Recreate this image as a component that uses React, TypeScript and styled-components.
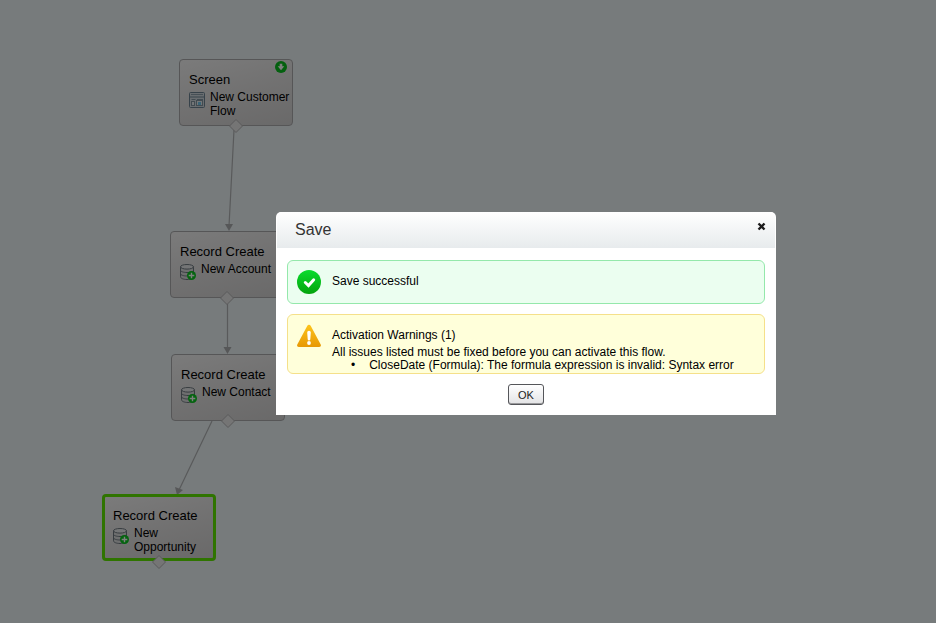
import React from "react";
import styled, { createGlobalStyle } from "styled-components";

const GlobalStyle = createGlobalStyle`
  * { box-sizing: border-box; }
  html, body, #root { height: 100%; }
  body {
    margin: 0;
    font-family: "Liberation Sans", Arial, Helvetica, sans-serif;
    font-size: 12px;
    color: #000;
  }
`;

const Page = styled.div`
  position: relative;
  min-height: 100%;
  overflow: hidden;
  background: #eef6f8;
`;

const Canvas = styled.main`
  position: absolute;
  inset: 0;
`;

const Connectors = styled.svg`
  position: absolute;
  inset: 0;
  width: 100%;
  height: 100%;
`;

const NodeCard = styled.article<{ $x: number; $y: number; $selected?: boolean }>`
  position: absolute;
  left: ${(p) => p.$x}px;
  top: ${(p) => p.$y}px;
  width: 114px;
  height: 67px;
  padding: ${(p) => (p.$selected ? "11px 0 0 8px" : "12px 0 0 9px")};
  border: ${(p) => (p.$selected ? "3px solid #5ee800" : "1px solid #acacae")};
  border-radius: 4px;
  background: linear-gradient(165deg, #f6f6f6 0%, #e4e3e3 50%, #d4d3d3 100%);
`;

const NodeType = styled.h2`
  margin: 0;
  font-size: 13px;
  line-height: 15px;
  font-weight: 400;
`;

const NodeBody = styled.div`
  display: flex;
  align-items: flex-start;
  gap: 5px;
  margin-top: 3px;

  svg { flex: none; margin-top: 2px; }
`;

const NodeName = styled.span`
  font-size: 12px;
  line-height: 14px;
`;

const StartBadge = styled.svg`
  position: absolute;
  right: 5px;
  top: 1px;
`;

const Port = styled.svg<{ $selected?: boolean }>`
  position: absolute;
  left: 50%;
  bottom: ${(p) => (p.$selected ? "-12px" : "-9px")};
  transform: translateX(-50%);
`;

const Overlay = styled.div`
  position: absolute;
  inset: 0;
  display: flex;
  justify-content: flex-end;
  align-items: flex-start;
  padding: 212px 160px 0 16px;
  background: rgba(0, 0, 0, 0.5);
`;

const Dialog = styled.section`
  width: 100%;
  max-width: 500px;
  border-radius: 5px 5px 0 0;
  background: #fff;
`;

const DialogHeader = styled.header`
  display: flex;
  justify-content: space-between;
  align-items: flex-start;
  margin: 0 1px;
  height: 36px;
  padding: 8px 8px 0 18px;
  border-radius: 5px 5px 0 0;
  background: linear-gradient(#fff, #e7ebed);
`;

const DialogTitle = styled.h1`
  margin: 0;
  font-size: 16px;
  line-height: 20px;
  font-weight: 400;
  color: #333;
`;

const CloseButton = styled.button`
  display: flex;
  margin: 2px 0 0;
  padding: 0;
  border: 0;
  background: none;
`;

const DialogBody = styled.div`
  display: flex;
  flex-direction: column;
  gap: 10px;
  padding: 12px 11px 10px;
`;

const Notice = styled.div<{ $kind: "success" | "warning" }>`
  display: flex;
  align-items: flex-start;
  gap: 11px;
  padding: ${(p) => (p.$kind === "success" ? "8px 9px 8px" : "9px 9px 1px")};
  border: 1px solid ${(p) => (p.$kind === "success" ? "#94e8ab" : "#f5e08a")};
  border-radius: 6px;
  background: ${(p) => (p.$kind === "success" ? "#ebfef0" : "#ffffda")};

  svg { flex: none; }
`;

const Message = styled.p`
  margin: 4px 0 0;
  line-height: 16px;
`;

const WarningText = styled.div`
  padding-top: 3px;
`;

const WarningTitle = styled.h2`
  margin: 0 0 3px;
  font-size: 12px;
  line-height: 16px;
  font-weight: 400;
`;

const WarningLine = styled.p`
  margin: 0;
  line-height: 13px;
`;

const IssueList = styled.ul`
  margin: 0;
  padding: 0 0 0 19px;
  list-style: none;
`;

const Issue = styled.li`
  display: flex;
  gap: 14px;
  line-height: 13px;

  &::before { content: "•"; }
`;

const OkButton = styled.button`
  align-self: center;
  width: 36px;
  height: 21px;
  padding: 0;
  border: 1px solid #55565a;
  border-radius: 3px;
  background: linear-gradient(#fff, #e3e3e5);
  box-shadow: inset 0 -1px 0 #9a9a9c;
  font-family: inherit;
  font-size: 11px;
  line-height: 18px;
  color: #222;
`;

const ScreenIcon = () => (
  <svg width="16" height="16" viewBox="0 0 16 16" aria-hidden="true">
    <rect x="0.5" y="0.5" width="15" height="15" rx="1" fill="#d3dbe1" stroke="#6f8594" />
    <path d="M2 2.5h12" stroke="#8ea0ac" />
    <path d="M1 5h14" stroke="#6f8594" />
    <path d="M2.500 7.500h4M8 7.500h6" stroke="#8496a2" />
    <rect x="2.500" y="9.500" width="3" height="4" fill="#e6edf1" stroke="#8496a2" />
    <rect x="7.500" y="8.500" width="6" height="5" fill="#e6edf1" stroke="#8496a2" />
    <rect x="9" y="10" width="3" height="3" fill="#74c8ec" />
  </svg>
);

const RecordIcon = () => (
  <svg width="16" height="16" viewBox="0 0 16 16" aria-hidden="true">
    <path d="M.5 2.8v10C.5 14.3 3.400 15.500 7 15.500s6.500-1.200 6.500-2.700v-10z" fill="#dcdedf" stroke="#707a82" />
    <ellipse cx="7" cy="2.800" rx="6.500" ry="2.300" fill="#e9ebec" stroke="#707a82" />
    <path d="M.5 6.200c0 1.300 2.900 2.300 6.500 2.300s6.500-1 6.500-2.300M.5 9.700c0 1.300 2.900 2.300 6.500 2.300" fill="none" stroke="#707a82" />
    <circle cx="11.500" cy="11.500" r="4.500" fill="#08c81e" />
    <path d="M11.500 8.700v5.600M8.700 11.500h5.600" stroke="#fff" strokeWidth="1.400" />
  </svg>
);

const SuccessIcon = () => (
  <svg width="24" height="26" viewBox="0 0 24 26" aria-hidden="true">
    <defs>
      <linearGradient id="successFill" x1="0" y1="0" x2="0" y2="1">
        <stop offset="0" stopColor="#09dc2d" />
        <stop offset="1" stopColor="#05a30d" />
      </linearGradient>
    </defs>
    <circle cx="12" cy="13" r="12" fill="url(#successFill)" />
    <path d="M8.300 13.500l3.200 3 5.200-5.700" fill="none" stroke="#fff" strokeWidth="3" strokeLinecap="round" />
  </svg>
);

const WarningIcon = () => (
  <svg width="24" height="24" viewBox="0 0 24 24" aria-hidden="true">
    <defs>
      <linearGradient id="warningFill" x1="0" y1="0" x2="0" y2="1">
        <stop offset="0" stopColor="#fdc41c" />
        <stop offset="1" stopColor="#e79805" />
      </linearGradient>
    </defs>
    <path d="M10.200 2c.8-1.700 2.800-1.700 3.600 0l9.900 18.400c.6 1.200 0 2.600-1.500 2.600H1.800C.3 23-.3 21.600.3 20.400z" fill="url(#warningFill)" />
    <path d="M10.200 8.500a1.800 1.800 0 0 1 3.600 0l-.5 6.800a1.300 1.300 0 0 1-2.600 0z" fill="#fff" />
    <circle cx="12" cy="19" r="1.900" fill="#fff" />
  </svg>
);

const Diamond = ({ selected }: { selected?: boolean }) => (
  <Port $selected={selected} width="16" height="16" viewBox="0 0 16 16" aria-hidden="true">
    <path d="M8 1.500L14.500 8 8 14.500 1.500 8z" fill="#eaeaea" stroke="#b4b4b6" />
  </Port>
);

interface FlowNode {
  type: string;
  name: string;
  x: number;
  y: number;
  start?: boolean;
  selected?: boolean;
}

const nodes: FlowNode[] = [
  { type: "Screen", name: "New Customer Flow", x: 179, y: 59, start: true },
  { type: "Record Create", name: "New Account", x: 170, y: 231 },
  { type: "Record Create", name: "New Contact", x: 171, y: 354 },
  { type: "Record Create", name: "New Opportunity", x: 102, y: 494, selected: true },
];

export default function App() {
  return (
    <>
      <GlobalStyle />
      <Page>
        <Canvas>
          <Connectors aria-hidden="true">
            <g stroke="#b2b4b6" strokeWidth="1.200">
              <path d="M234 130L229 226M227.500 304V348M212 421L179 490" fill="none" />
            </g>
            <g fill="#adaeb0">
              <path d="M225 224h8l-4 7z" />
              <path d="M223.500 347h8l-4 7z" />
              <path d="M175 487l8 3-6 5z" />
            </g>
          </Connectors>
          {nodes.map((node) => (
            <NodeCard key={node.name} $x={node.x} $y={node.y} $selected={node.selected}>
              <NodeType>{node.type}</NodeType>
              <NodeBody>
                {node.start ? <ScreenIcon /> : <RecordIcon />}
                <NodeName>{node.name}</NodeName>
              </NodeBody>
              {node.start && (
                <StartBadge width="12" height="12" viewBox="0 0 12 12" aria-hidden="true">
                  <circle cx="6" cy="6" r="6" fill="#08c01e" />
                  <path d="M4.700 2.800h2.600v2.400h2L6 9.200 2.700 5.200h2z" fill="#fff" />
                </StartBadge>
              )}
              <Diamond selected={node.selected} />
            </NodeCard>
          ))}
        </Canvas>
        <Overlay>
          <Dialog role="dialog" aria-modal="true" aria-labelledby="dialog-title">
            <DialogHeader>
              <DialogTitle id="dialog-title">Save</DialogTitle>
              <CloseButton type="button" aria-label="Close">
                <svg width="10" height="10" viewBox="0 0 10 10" aria-hidden="true">
                  <path d="M1.500 1.500l6 6M7.500 1.500l-6 6" stroke="#1c1c1c" strokeWidth="2.400" />
                </svg>
              </CloseButton>
            </DialogHeader>
            <DialogBody>
              <Notice $kind="success">
                <SuccessIcon />
                <Message>Save successful</Message>
              </Notice>
              <Notice $kind="warning">
                <WarningIcon />
                <WarningText>
                  <WarningTitle>Activation Warnings (1)</WarningTitle>
                  <WarningLine>All issues listed must be fixed before you can activate this flow.</WarningLine>
                  <IssueList>
                    <Issue>CloseDate (Formula): The formula expression is invalid: Syntax error</Issue>
                  </IssueList>
                </WarningText>
              </Notice>
              <OkButton type="button">OK</OkButton>
            </DialogBody>
          </Dialog>
        </Overlay>
      </Page>
    </>
  );
}
